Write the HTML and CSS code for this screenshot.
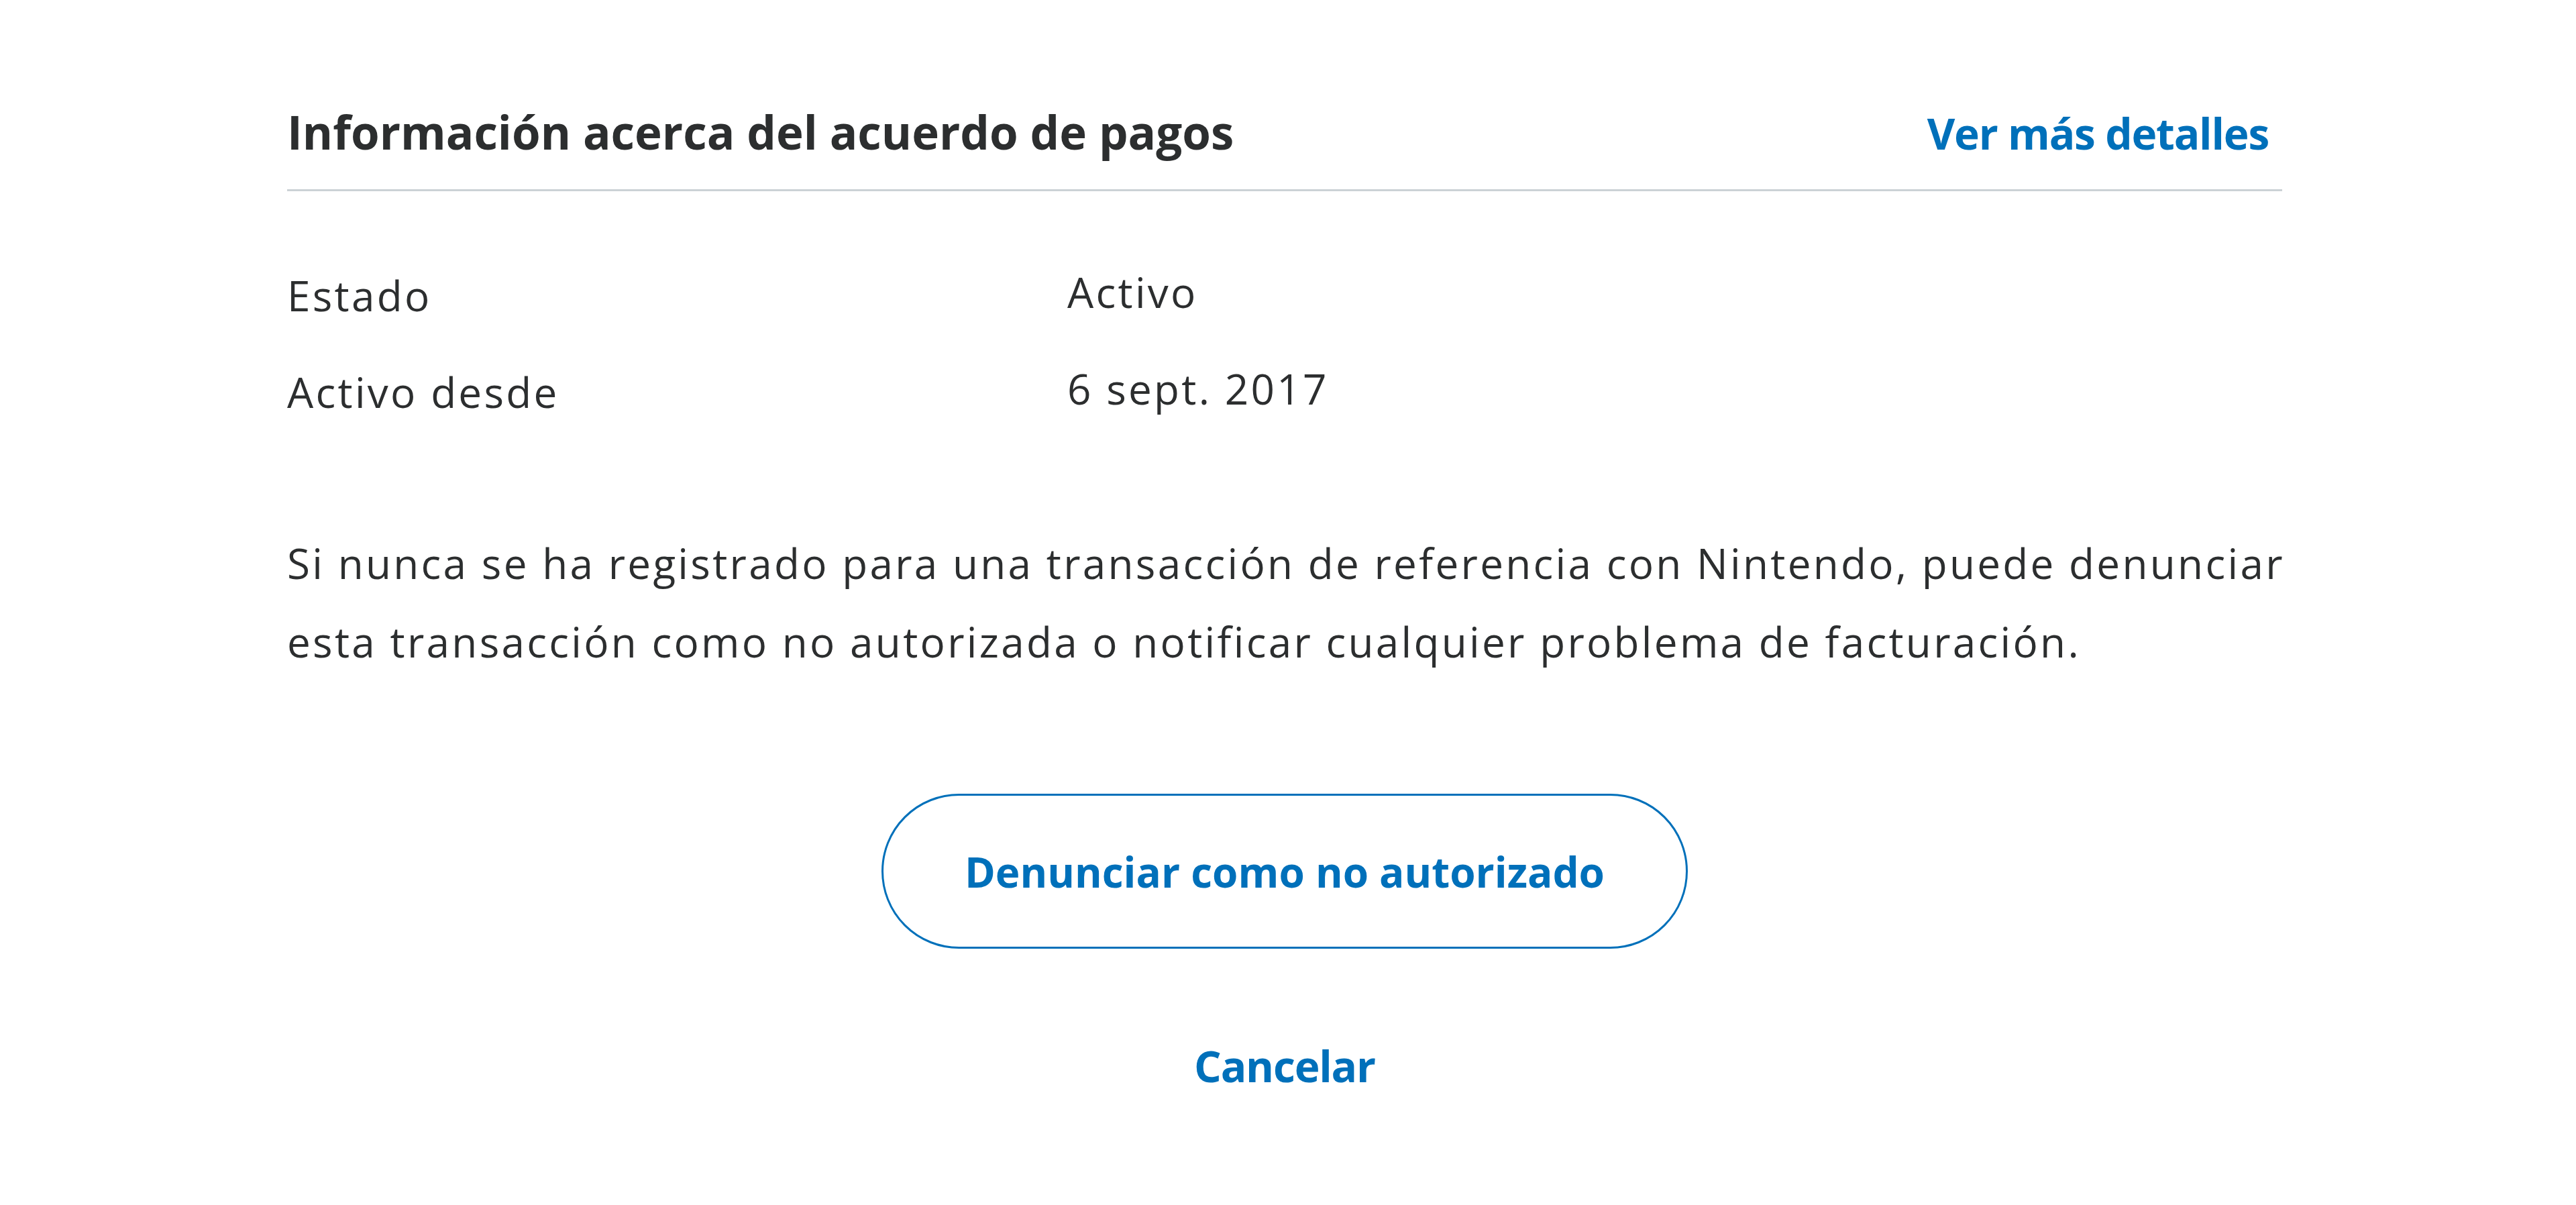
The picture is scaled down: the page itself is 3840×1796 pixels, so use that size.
FILE: index.html
```html
<!DOCTYPE html>
<html lang="es">
<head>
  <meta charset="UTF-8" />
  <meta name="viewport" content="width=device-width, initial-scale=1.0" />
  <title>Acuerdo de pagos</title>
  <link rel="stylesheet" href="styles.css">
</head>
<body>
  <div class="panel">
    <div class="cabecera">
      <h2>Información acerca del acuerdo de pagos</h2>
      <a href="#" class="enlace detalles">Ver más detalles</a>
    </div>

    <div class="datos">
      <div class="etiqueta">Estado</div>
      <div class="valor">Activo</div>
      <div class="etiqueta">Activo desde</div>
      <div class="valor">6 sept. 2017</div>
    </div>

    <p class="aviso">Si nunca se ha registrado para una transacción de referencia con Nintendo, puede denunciar esta transacción como no autorizada o notificar cualquier problema de facturación.</p>

    <div class="acciones">
      <button class="boton">Denunciar como no autorizado</button>
      <a href="#" class="enlace cancelar">Cancelar</a>
    </div>
  </div>
</body>
</html>
```

FILE: styles.css
```css
body {
  margin: 0;
  background: #fff;
  color: #2c2e2f;
  font-family: 'Open Sans', 'Noto Sans', sans-serif;
}
.panel {
  width: 2974px;
  margin-left: 428px;
  padding-top: 154px;
}
.cabecera {
  display: flex;
  justify-content: space-between;
  align-items: baseline;
  padding-bottom: 41px;
  border-bottom: 3px solid #cbd2d6;
}
.cabecera h2 {
  margin: 0;
  font-size: 69px;
  line-height: 84px;
  font-weight: 700;
}
.enlace {
  color: #0070ba;
  font-size: 64px;
  line-height: 84px;
  font-weight: 700;
  letter-spacing: -1.2px;
  text-decoration: none;
}
.detalles {
  margin-right: 20px;
}
.datos {
  display: grid;
  grid-template-columns: 1163px 1fr;
  row-gap: 60px;
  margin-top: 113px;
  font-size: 62px;
  line-height: 84px;
  letter-spacing: 3.3px;
}
.valor {
  margin-top: -5px;
}
.aviso {
  margin: 155px -60px 0 0;
  font-size: 62px;
  line-height: 117px;
  letter-spacing: 3.3px;
}
.acciones {
  display: flex;
  flex-direction: column;
  align-items: center;
  margin-top: 168px;
}
.boton {
  width: 1202px;
  height: 231px;
  border: 3px solid #0070ba;
  border-radius: 116px;
  background: #fff;
  color: #0070ba;
  font-family: inherit;
  font-size: 62px;
  font-weight: 700;
  cursor: pointer;
}
.cancelar {
  margin-top: 133px;
}
```
